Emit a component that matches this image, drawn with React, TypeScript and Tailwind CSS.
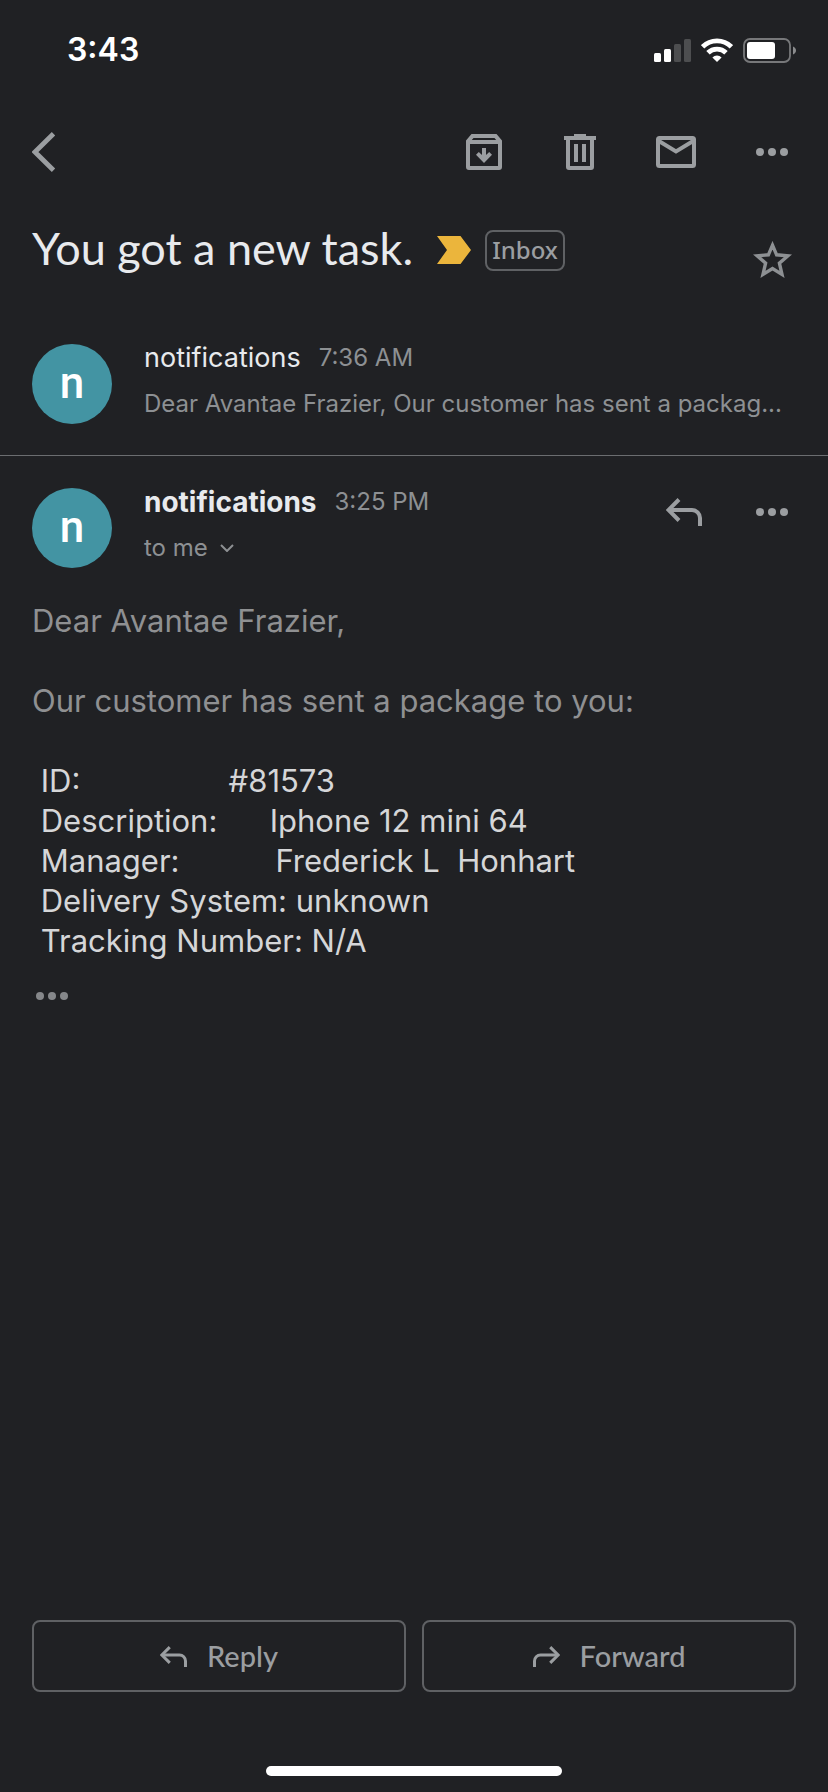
import React from "react";

function Dots({ className }: { className: string }) {
  return (
    <svg viewBox="0 0 32 8" className={className} fill="currentColor" aria-hidden="true">
      <circle cx="4" cy="4" r="4" />
      <circle cx="16" cy="4" r="4" />
      <circle cx="28" cy="4" r="4" />
    </svg>
  );
}

function ReplyArrow({ className }: { className: string }) {
  return (
    <svg viewBox="0 0 36 28" className={className} fill="none" stroke="currentColor" strokeWidth="4" aria-hidden="true">
      <path d="M13 1.500 2.500 12 13 22.500" />
      <path d="M3 12H26a8 8 0 0 1 8 8V28" />
    </svg>
  );
}

function StatusBar() {
  return (
    <div className="flex h-[100px] items-center justify-between pr-8 pl-[67px] text-white">
      <span className="text-[32px] leading-10 font-semibold">3:43</span>
      <div className="flex items-center gap-[10px]">
        <svg viewBox="0 0 37 23" className="h-[23px] w-[37px]" fill="currentColor" aria-label="Signal">
          <rect x="0" y="14" width="7" height="9" rx="1.500" />
          <rect x="10" y="10" width="7" height="13" rx="1.500" />
          <rect x="20" y="5" width="7" height="18" rx="1.500" fill="#4d4e50" />
          <rect x="30" y="0" width="7" height="23" rx="1.500" fill="#4d4e50" />
        </svg>
        <svg viewBox="0 0 32 24" className="h-6 w-8" aria-label="Wi-Fi">
          <g fill="none" stroke="currentColor" strokeWidth="4.800">
            <path d="M1.600 8.800a20.400 20.400 0 0 1 28.800 0" />
            <path d="M7 14.800a12.700 12.700 0 0 1 18 0" />
          </g>
          <path fill="currentColor" d="M16 24l-4.600-4.600a6.500 6.500 0 0 1 9.200 0z" />
        </svg>
        <svg viewBox="0 0 53 25" className="h-[25px] w-[53px]" aria-label="Battery">
          <rect x="1" y="1" width="46" height="23" rx="6" fill="none" stroke="#77787a" strokeWidth="1.800" />
          <rect x="4" y="4" width="28" height="17" rx="3" fill="currentColor" />
          <path d="M50 8.500c4 1.500 4 6.500 0 8z" fill="#8a8b8d" />
        </svg>
      </div>
    </div>
  );
}

function Toolbar() {
  return (
    <header className="flex h-[104px] items-center justify-between px-8 text-[#9b9ea1]">
      <button type="button" aria-label="Back">
        <svg viewBox="0 0 24 40" className="h-10 w-6" fill="none" stroke="currentColor" strokeWidth="4.800">
          <path d="M21.500 1.800 3 20l18.500 18.200" />
        </svg>
      </button>
      <div className="flex items-center gap-12">
        <button type="button" aria-label="Archive" className="flex w-12 justify-center">
          <svg viewBox="0 0 36 36" className="size-9" fill="currentColor">
            <path
              fillRule="evenodd"
              d="M5.500 0h25L36 6.500V33a3 3 0 0 1-3 3H3a3 3 0 0 1-3-3V6.500zM7.500 4 5.800 6h24.400L28.500 4zM4 10v22h28V10z"
            />
            <path d="M16 14h4v7l3.200-3 2.800 2.800L18 29l-8-8.200 2.800-2.800 3.200 3z" />
          </svg>
        </button>
        <button type="button" aria-label="Delete" className="flex w-12 justify-center">
          <svg viewBox="0 0 32 36" className="h-9 w-8" fill="currentColor">
            <path
              fillRule="evenodd"
              d="M10 0h12v2h10v4h-2v27a3 3 0 0 1-3 3H5a3 3 0 0 1-3-3V6H0V2h10zM6 6v26h20V6z"
            />
            <path d="M10 10h4v18h-4zM18 10h4v18h-4z" />
          </svg>
        </button>
        <button type="button" aria-label="Mark as unread" className="flex w-12 justify-center">
          <svg viewBox="0 0 40 32" className="h-8 w-10" fill="none" stroke="currentColor" strokeWidth="4">
            <rect x="2" y="2" width="36" height="28" rx="1.500" />
            <path d="M2 4.500 20 15.500 38 4.500" />
          </svg>
        </button>
        <button type="button" aria-label="More options" className="flex w-12 justify-center">
          <Dots className="h-2 w-8" />
        </button>
      </div>
    </header>
  );
}

function Subject() {
  return (
    <div className="flex items-start justify-between px-8 pt-6">
      <div className="flex items-center">
        <h1 className="pb-1 font-['Lato',sans-serif] text-[45px] leading-10 text-[#e8eaed]">You got a new task.</h1>
        <svg viewBox="0 0 34 28" className="ml-6 h-7 w-[34px]" aria-label="Important">
          <path fill="#ebb53c" d="M0 0h23.500L34 14 23.500 28H0l10-14z" />
        </svg>
        <button
          type="button"
          className="ml-[14px] h-[41px] w-20 rounded-lg border-2 border-[#5f6164] font-['Noto_Sans',sans-serif] text-2xl leading-8 font-medium text-[#9b9ea1]"
        >
          Inbox
        </button>
      </div>
      <button type="button" aria-label="Star" className="flex w-12 justify-center pt-[13px] text-[#8d9093]">
        <svg viewBox="0 0 39 37" className="h-[37px] w-[39px]" fill="none" stroke="currentColor" strokeWidth="3.400">
          <path d="M19.500 4.200 23.600 13.800l11.400 1-8.600 7.400 2.600 11.200-9.500-5.900-9.500 5.900 2.600-11.200L4 14.800l11.400-1z" />
        </svg>
      </button>
    </div>
  );
}

function Avatar() {
  return (
    <div className="flex size-20 shrink-0 items-center justify-center rounded-full bg-[#4394a3] pb-0.5 font-['Roboto',sans-serif] text-[44px] leading-none font-medium text-white">
      n
    </div>
  );
}

const details = [
  " ID:                 #81573",
  " Description:      Iphone 12 mini 64",
  " Manager:           Frederick L  Honhart",
  " Delivery System: unknown",
  " Tracking Number: N/A",
];

export default function App() {
  return (
    <div className="flex min-h-screen flex-col bg-[#202124] font-['Inter',sans-serif]">
      <StatusBar />
      <Toolbar />
      <Subject />

      <main className="flex-1">
        <article className="mt-[58px] flex gap-8 border-b border-[#6b6d70] px-8 pt-2 pb-[31px]">
          <Avatar />
          <div className="min-w-0 flex-1">
            <div className="flex h-7 items-center gap-[18px]">
              <h2 className="text-[27px] leading-7 text-[#e8eaed]">notifications</h2>
              <time className="text-2xl leading-7 text-[#8d9093]">7:36 AM</time>
            </div>
            <p className="mt-[18px] truncate text-2xl leading-7 text-[#8d9093]">
              Dear Avantae Frazier, Our customer has sent a packag...
            </p>
          </div>
        </article>

        <article>
          <div className="flex gap-8 px-8 pt-8">
            <Avatar />
            <div className="flex-1">
              <div className="flex h-7 items-center gap-[18px]">
                <h2 className="text-[28px] leading-7 font-bold text-[#e8eaed]">notifications</h2>
                <time className="text-2xl leading-7 text-[#8d9093]">3:25 PM</time>
              </div>
              <button type="button" className="mt-[18px] flex items-center gap-3 text-2xl leading-7 text-[#8d9093]">
                to me
                <svg viewBox="0 0 14 8" className="h-2 w-[14px]" fill="none" stroke="currentColor" strokeWidth="2">
                  <path d="m1 1 6 6 6-6" />
                </svg>
              </button>
            </div>
            <div className="flex h-12 items-center gap-10 text-[#9b9ea1]">
              <button type="button" aria-label="Reply to message" className="flex w-12 justify-center">
                <ReplyArrow className="h-7 w-9" />
              </button>
              <button type="button" aria-label="Message options" className="flex w-12 justify-center">
                <Dots className="h-2 w-8" />
              </button>
            </div>
          </div>

          <div className="px-8 pt-[33px] text-[31px] leading-10 text-[#8f9092]">
            <p>Dear Avantae Frazier,</p>
            <p className="mt-10">Our customer has sent a package to you:</p>
            <div className="mt-10 whitespace-pre text-[#d5d6d8]">
              {details.map((line) => (
                <p key={line}>{line}</p>
              ))}
            </div>
            <button type="button" aria-label="Show quoted text" className="mt-[31px] ml-1 block text-[#85878a]">
              <Dots className="h-2 w-8" />
            </button>
          </div>
        </article>
      </main>

      <footer className="px-8 pb-4">
        <div className="grid grid-cols-2 gap-4 font-['Lato',sans-serif] text-[29px] leading-8 font-medium text-[#9b9ea1]">
          <button type="button" className="flex h-[72px] items-center justify-center gap-5 rounded-lg border-2 border-[#5f6164]">
            <ReplyArrow className="h-[21px] w-[27px]" />
            Reply
          </button>
          <button type="button" className="flex h-[72px] items-center justify-center gap-5 rounded-lg border-2 border-[#5f6164]">
            <ReplyArrow className="h-[21px] w-[27px] -scale-x-100" />
            Forward
          </button>
        </div>
        <div className="mx-auto mt-[74px] h-[10px] w-[296px] rounded-full bg-white" />
      </footer>
    </div>
  );
}
